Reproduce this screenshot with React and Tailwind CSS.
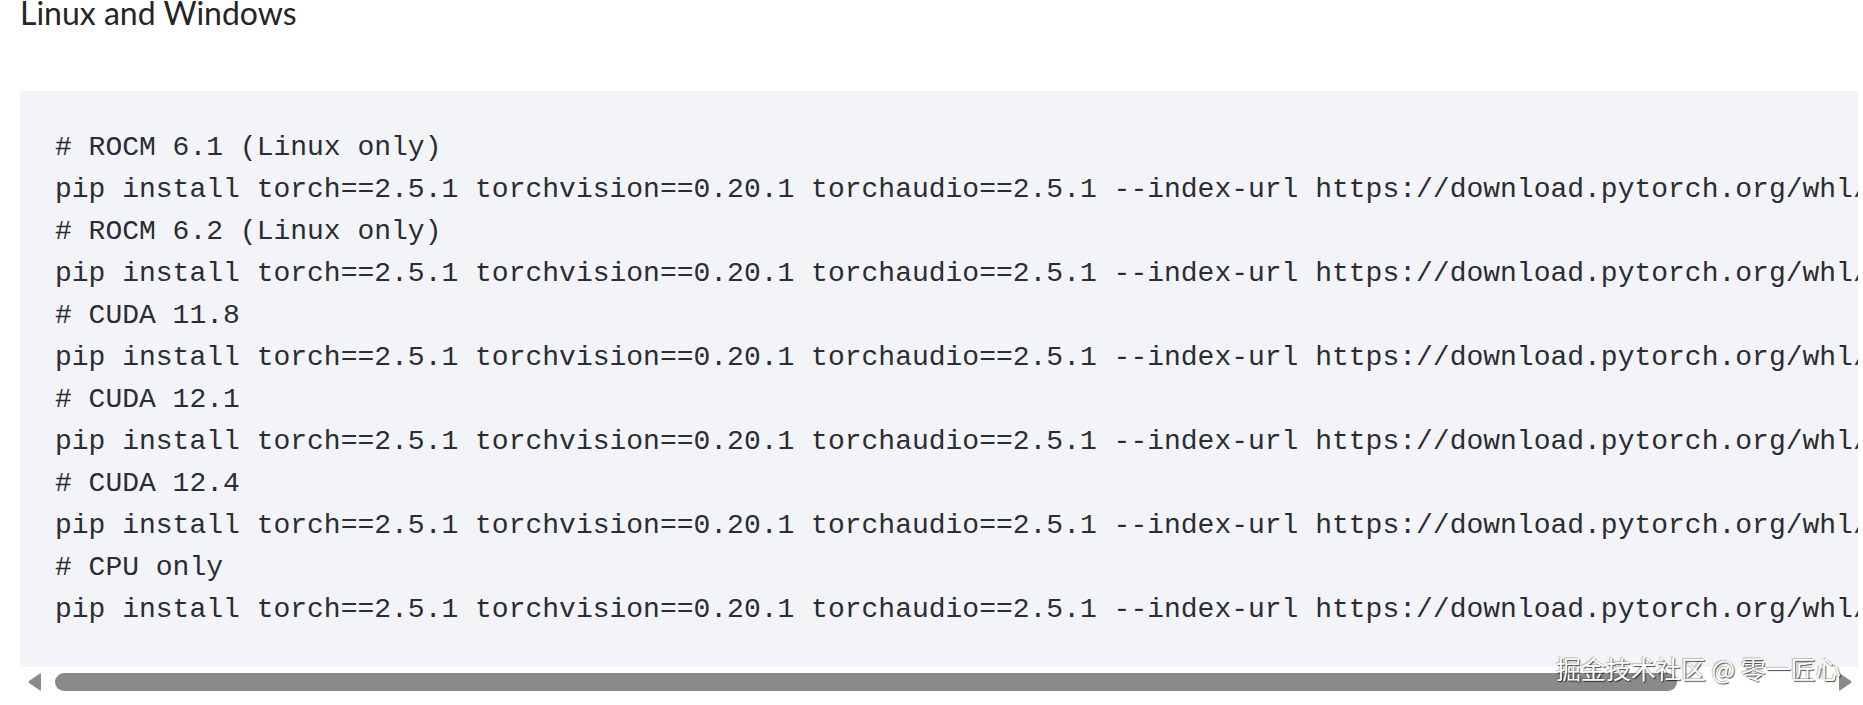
import React from "react";

const lines = [
  "# ROCM 6.1 (Linux only)",
  "pip install torch==2.5.1 torchvision==0.20.1 torchaudio==2.5.1 --index-url https://download.pytorch.org/whl/rocm6.1",
  "# ROCM 6.2 (Linux only)",
  "pip install torch==2.5.1 torchvision==0.20.1 torchaudio==2.5.1 --index-url https://download.pytorch.org/whl/rocm6.2",
  "# CUDA 11.8",
  "pip install torch==2.5.1 torchvision==0.20.1 torchaudio==2.5.1 --index-url https://download.pytorch.org/whl/cu118",
  "# CUDA 12.1",
  "pip install torch==2.5.1 torchvision==0.20.1 torchaudio==2.5.1 --index-url https://download.pytorch.org/whl/cu121",
  "# CUDA 12.4",
  "pip install torch==2.5.1 torchvision==0.20.1 torchaudio==2.5.1 --index-url https://download.pytorch.org/whl/cu124",
  "# CPU only",
  "pip install torch==2.5.1 torchvision==0.20.1 torchaudio==2.5.1 --index-url https://download.pytorch.org/whl/cpu",
];

export default function App() {
  return (
    <div className="relative w-[1863px] h-[705px] overflow-hidden bg-white">
      <h2 className="-mt-[6px] ml-5 text-[32px] leading-[1.2] font-normal text-[#252525] [font-family:Lato,'Noto_Sans',sans-serif]">
        Linux and Windows
      </h2>
      <div className="mt-[59px] ml-5 w-[1838px] overflow-hidden bg-[#f3f4f8] pt-9 pb-9 pl-[35px]">
        <pre className="m-0 whitespace-pre text-[28px] leading-[42px] text-[#2a2d33] [font-family:'Liberation_Mono','DejaVu_Sans_Mono',monospace]">
          {lines.join("\n")}
        </pre>
      </div>
      <div className="flex items-center h-[30px] pl-[28px]">
        <svg width="14" height="18" viewBox="0 0 14 18" className="shrink-0">
          <path d="M13 1 L13 17 Q13 18 12 17.5 L1 10 Q0 9 1 8 L12 0.5 Q13 0 13 1 Z" fill="#8a8a8a" />
        </svg>
        <div className="ml-[13px] w-[1622px] h-[18px] rounded-full bg-[#8a8a8a]" />
        <div className="flex-1" />
        <svg width="14" height="18" viewBox="0 0 14 18" className="shrink-0 mr-[11px]">
          <path d="M1 1 L1 17 Q1 18 2 17.5 L13 10 Q14 9 13 8 L2 0.5 Q1 0 1 1 Z" fill="#8a8a8a" />
        </svg>
      </div>
      <div className="absolute left-[1556px] top-[653px] text-[25px] leading-[30px] text-white whitespace-nowrap [font-family:'Noto_Sans_CJK_SC','Noto_Sans',sans-serif] [text-shadow:1px_1px_1px_rgba(0,0,0,0.7),-1px_-1px_1px_rgba(0,0,0,0.25)]">
        掘金技术社区 @ 零一匠心
      </div>
    </div>
  );
}
